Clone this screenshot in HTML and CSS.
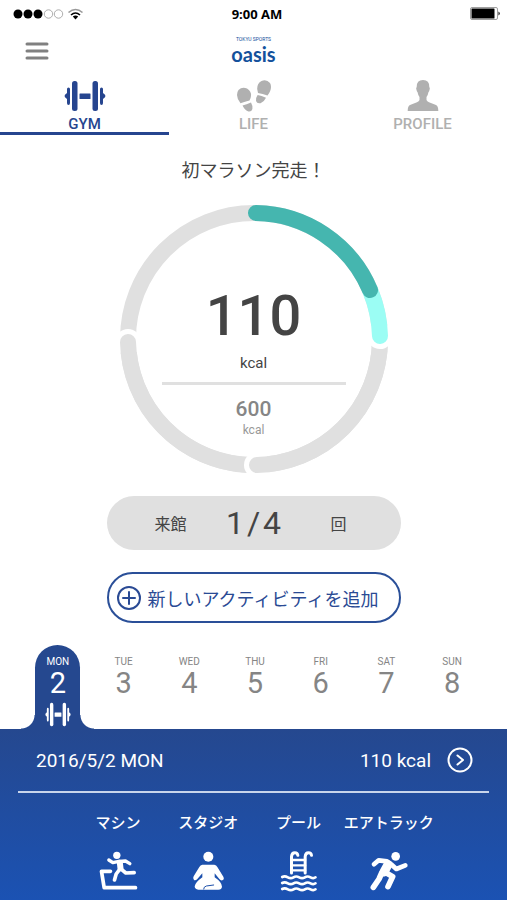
FILE: index.html
```html
<!DOCTYPE html>
<html lang="ja">
<head>
  <meta charset="UTF-8">
  <meta name="viewport" content="width=device-width, initial-scale=1.0">
  <title>OASIS</title>
  <link rel="stylesheet" href="styles.css">
</head>
<body>
  <svg width="0" height="0" class="symbols">
    <symbol id="dumbbell" viewBox="0 0 42 32" preserveAspectRatio="none">
      <path d="M1 14.8 L3 13 V9 Q3 7.5 4.5 7.5 T6 9 V23 Q6 25 4.5 25 T3 23 V19 L1 17.2 Q.2 16 1 14.8Z"/>
      <rect x="8" y="1" width="5.5" height="30" rx="2.5"/>
      <rect x="15.5" y="13.5" width="11" height="5.5" rx=".5"/>
      <rect x="28.5" y="1" width="5.5" height="30" rx="2.5"/>
      <path d="M41 14.8 L39 13 V9 Q39 7.5 37.5 7.5 T36 9 V23 Q36 25 37.5 25 T39 23 V19 L41 17.2 Q41.8 16 41 14.8Z"/>
    </symbol>
  </svg>

  <div class="status">
    <svg class="signal" viewBox="0 0 72 14" width="72" height="14">
      <circle cx="5" cy="7" r="4.5"/>
      <circle cx="15" cy="7" r="4.5"/>
      <circle cx="25" cy="7" r="4.5"/>
      <g fill="none" stroke="#999" stroke-width=".8">
        <circle cx="35.5" cy="7" r="4.2"/>
        <circle cx="45.5" cy="7" r="4.2"/>
      </g>
      <g fill="none" stroke="#000" stroke-width="1.6">
        <path d="M55.5 5.5 Q62.5 -.5 69.5 5.5" stroke="#999"/>
        <path d="M58 8 Q62.5 4 67 8"/>
      </g>
      <path d="M59.8 9.6 Q62.5 7.6 65.2 9.6 L62.5 12.4Z"/>
    </svg>
    <span class="time">9:00 AM</span>
    <svg class="battery" viewBox="0 0 31 13" width="31" height="13">
      <rect x=".5" y=".5" width="27" height="12" rx="1.5" fill="#fff" stroke="#777" stroke-width=".7"/>
      <rect x="1.5" y="1.5" width="23" height="10" rx=".5"/>
      <path d="M28.5 4.5 Q31 6.5 28.5 8.5Z"/>
    </svg>
  </div>

  <header class="header">
    <button class="menu" aria-label="メニュー">
      <svg viewBox="0 0 24 18" width="24" height="18" stroke="#808080" stroke-width="3" stroke-linecap="round">
        <path d="M2 2 H22 M2 9 H22 M2 16 H22"/>
      </svg>
    </button>
    <div class="logo">
      <span class="logo-sub">TOKYU SPORTS</span>
      <span class="logo-name">oasis</span>
    </div>
  </header>

  <nav class="tabs">
    <a class="tab active" href="#gym">
      <svg width="42" height="32"><use href="#dumbbell"/></svg>
      GYM
    </a>
    <a class="tab" href="#life">
      <svg viewBox="0 0 40 32" width="40" height="32">
        <path d="M4.5 10 Q8 6.500 13 8.500 Q17.500 11 17 16 Q16.800 18.500 15.500 20.500 Q11 21.500 6.500 23.300 Q3 19 3 15 Q3 12 4.500 10Z"/>
        <path d="M8.500 25.500 Q12.500 24.500 17 22.500 Q19 26 18.400 29 Q17.500 32 14.500 31.500 Q11 30.500 8.500 25.500Z"/>
        <path d="M36 3 Q32.500 -1 27.500 1 Q23 3.500 23.200 9 L24 13 Q28.500 13.500 33.500 15.600 Q37 11 37 7 Q37 4.500 36 3Z"/>
        <path d="M23.600 15 Q27.500 15.500 32 17.800 Q30.500 21.500 26.500 23.200 Q23 24 22 21 Q21.500 18 23.600 15Z"/>
      </svg>
      LIFE
    </a>
    <a class="tab" href="#profile">
      <svg viewBox="0 0 32 32" width="32" height="32">
        <path d="M16 0 Q22.500 0 22.300 7 Q23.300 8 22.500 10 Q22 12 21.500 12 Q21 15 19.500 17 V20 Q20 21.500 22 22.300 L29 25 Q31.300 26 31.300 31 H.7 Q.7 26 3 25 L10 22.300 Q12 21.500 12.500 20 V17 Q11 15 10.500 12 Q10 12 9.500 10 Q8.700 8 9.700 7 Q9.500 0 16 0Z"/>
      </svg>
      PROFILE
    </a>
  </nav>

  <main class="main">
    <h1 class="goal">初マラソン完走！</h1>

    <div class="ring">
      <!-- each segment lies over the one before it, with a white rim round its cap -->
      <svg class="ring-chart" viewBox="0 0 270 270" width="270" height="270" fill="none" stroke-width="16" stroke-linecap="round">
        <circle cx="135" cy="135" r="126" stroke="#e0e0e0"/>
        <circle cx="9" cy="138" r="13" fill="#fff"/>
        <path d="M9 138 A126 126 0 0 0 128 261" stroke="#e0e0e0"/>
        <circle cx="138" cy="261" r="13" fill="#fff"/>
        <path d="M138 261 A126 126 0 0 0 261 138" stroke="#e0e0e0"/>
        <circle cx="261" cy="132" r="13" fill="#fff"/>
        <path d="M251 86 A126 126 0 0 1 261 132" stroke="#9bfdf4"/>
        <path d="M137 9 A126 126 0 0 1 251 86" stroke="#45b6af"/>
      </svg>
      <div class="ring-text">
        <span class="burned">110</span>
        <span class="unit">kcal</span>
        <span class="target">600</span>
        <span class="unit-small">kcal</span>
      </div>
    </div>

    <div class="visits">
      <span>来館</span>
      <span class="count"><span>1</span><span>/</span><span>4</span></span>
      <span class="times">回</span>
    </div>

    <button class="add">
      <svg viewBox="0 0 24 24" width="24" height="24" fill="none" stroke="#2a4a94" stroke-width="2" stroke-linecap="round">
        <circle cx="12" cy="12" r="11"/>
        <path d="M12 6 V18 M6 12 H18"/>
      </svg>
      新しいアクティビティを追加
    </button>
  </main>

  <div class="week">
    <button class="day active">
      <span class="day-name">MON</span>
      <span class="day-num">2</span>
      <svg width="26" height="25"><use href="#dumbbell"/></svg>
    </button>
    <button class="day"><span class="day-name">TUE</span><span class="day-num">3</span></button>
    <button class="day"><span class="day-name">WED</span><span class="day-num">4</span></button>
    <button class="day"><span class="day-name">THU</span><span class="day-num">5</span></button>
    <button class="day"><span class="day-name">FRI</span><span class="day-num">6</span></button>
    <button class="day"><span class="day-name">SAT</span><span class="day-num">7</span></button>
    <button class="day"><span class="day-name">SUN</span><span class="day-num">8</span></button>
  </div>

  <section class="panel">
    <div class="summary">
      <span>2016/5/2 MON</span>
      <span class="total">110 kcal</span>
      <button class="more" aria-label="詳細">
        <svg viewBox="0 0 26 26" width="26" height="26" fill="none" stroke="#fff" stroke-width="2" stroke-linecap="round" stroke-linejoin="round">
          <circle cx="13" cy="13" r="11.5"/>
          <path d="M10.500 8.500 L16 13 L10.500 17.500"/>
        </svg>
      </button>
    </div>

    <div class="activities">
      <a class="activity" href="#machine">
        マシン
        <svg viewBox="49.5 147 132 132" width="44" height="44" fill="none" stroke="#fff" stroke-linecap="round" stroke-linejoin="round">
          <circle cx="112" cy="166" r="11" fill="#fff" stroke="none"/>
          <path d="M93 214 H66 L74 263 H168" stroke-width="11"/>
          <path d="M88 180 L100 188 L118 184 L138 183 L151 191" stroke-width="10"/>
          <path d="M121 188 L123 205" stroke-width="18"/>
          <path d="M126 208 L139 219 L164 218" stroke-width="11"/>
          <path d="M120 209 L110 222 L105 240" stroke-width="11"/>
        </svg>
      </a>
      <a class="activity" href="#studio">
        スタジオ
        <svg viewBox="321 147 132 132" width="44" height="44" fill="#fff" stroke-linecap="round" stroke-linejoin="round">
          <circle cx="388" cy="170" r="15"/>
          <path d="M370 194 H406 Q412 195 415 201 L433 230 Q437 238 430 241 Q425 242 421 237 L407 220 V232 Q428 246 429 260 Q428 269 418 269 H358 Q347 268 347 259 Q349 247 370 232 V220 L355 237 Q350 242 345 240 Q340 236 344 229 L361 201 Q364 195 370 194Z"/>
          <path d="M374 267 Q374 260 382 258 L404 255" fill="none" stroke="#1e50aa" stroke-width="3"/>
        </svg>
      </a>
      <a class="activity" href="#pool">
        プール
        <svg viewBox="52.5 147 132 132" width="44" height="44" fill="none" stroke="#fff" stroke-width="9" stroke-linecap="round" stroke-linejoin="round">
          <path d="M96 219 V170 Q97 158 106 158 Q114 158 115 166 M137 219 V170 Q138 158 147 158 Q155 158 156 166"/>
          <path stroke-width="7" d="M96 180 H137 M96 196 H137 M96 211 H137"/>
          <path stroke-width="8" d="M68 231 q8 -4 17 1 t17 0 t17 0 t17 0 t17 0 t15 0 M68 249 q8 -4 17 1 t17 0 t17 0 t17 0 t17 0 t15 0 M68 267 q8 -4 17 1 t17 0 t17 0 t17 0 t17 0 t15 0"/>
        </svg>
      </a>
      <a class="activity" href="#airtrack">
        エアトラック
        <svg viewBox="324 147 132 132" width="44" height="44" fill="none" stroke="#fff" stroke-width="17" stroke-linecap="round" stroke-linejoin="round">
          <circle cx="410" cy="169" r="13" fill="#fff" stroke="none"/>
          <path d="M345 193 L359 181 L384 184 L398 194 L412 207 L439 196" stroke-width="14"/>
          <path d="M387 194 L375 216" stroke-width="27"/>
          <path d="M368 219 L360 237 L343 262"/>
          <path d="M379 217 L401 230 L387 260"/>
        </svg>
      </a>
    </div>
  </section>
</body>
</html>
```

FILE: styles.css
```css
* {
  margin: 0;
  padding: 0;
  box-sizing: border-box;
}

body {
  font-family: Roboto, "Noto Sans CJK JP", sans-serif;
  background-color: #fff;
  color: #444;
  display: flex;
  flex-direction: column;
  min-height: 100vh;
}

button {
  font-family: inherit;
  background: none;
  border: none;
  color: inherit;
  cursor: pointer;
}

a {
  color: inherit;
  text-decoration: none;
}

svg {
  display: block;
}

.symbols {
  position: absolute;
}

/* Status bar */
.status {
  display: grid;
  grid-template-columns: 1fr auto 1fr;
  align-items: center;
  height: 27px;
  padding: 0 6px 0 13px;
}

.time {
  font-family: "Open Sans", sans-serif;
  font-size: 13px;
  font-weight: 700;
  line-height: 20px;
  color: #000;
}

.battery {
  justify-self: end;
}

/* Header */
.header {
  display: grid;
  grid-template-columns: 1fr auto 1fr;
  align-items: center;
  height: 48px;
  padding: 0 25px;
}

.menu {
  justify-self: start;
}

.logo {
  display: flex;
  flex-direction: column;
  align-items: center;
  color: #14519c;
}

.logo-sub {
  font-size: 5px;
  line-height: 6px;
}

.logo-name {
  font-family: Lato, sans-serif;
  font-size: 20px;
  font-weight: 700;
  line-height: 24px;
}

/* Tabs */
.tabs {
  display: flex;
}

.tab {
  flex: 1;
  display: flex;
  flex-direction: column;
  align-items: center;
  gap: 4px;
  padding-top: 5px;
  border-bottom: 3px solid transparent;
  font-size: 15px;
  font-weight: 500;
  line-height: 16px;
  color: #b0b0b0;
  fill: #b0b0b0;
}

.tab.active {
  color: #26458f;
  fill: #26458f;
  border-color: #26458f;
}

/* Goal and ring */
.main {
  display: flex;
  flex-direction: column;
  align-items: center;
  gap: 22px;
  padding: 25px 20px 22px;
}

.goal {
  font-size: 18px;
  font-weight: 400;
  line-height: 22px;
}

.ring {
  display: grid;
  justify-items: center;
}

.ring-chart,
.ring-text {
  grid-area: 1 / 1;
}

.ring-text {
  display: flex;
  flex-direction: column;
  align-items: center;
  width: 184px;
  padding-top: 80px;
}

.burned {
  font-size: 56px;
  font-weight: 500;
  line-height: 64px;
}

.unit {
  width: 100%;
  margin-top: 5px;
  padding-bottom: 9px;
  border-bottom: 3px solid #e0e0e0;
  font-size: 15px;
  line-height: 20px;
  text-align: center;
}

.target {
  margin-top: 11px;
  font-size: 21px;
  font-weight: 500;
  line-height: 26px;
  color: #868686;
}

.unit-small {
  font-size: 12px;
  line-height: 16px;
  color: #999;
}

/* Visits and add button */
.visits,
.add {
  align-items: center;
  width: 100%;
  max-width: 294px;
  border-radius: 27px;
}

.visits {
  display: grid;
  grid-template-columns: 1fr auto 1fr;
  height: 54px;
  padding: 0 48px;
  background-color: #e0e0e0;
  font-size: 16px;
}

.count {
  display: flex;
  gap: 3px;
  font-size: 32px;
  line-height: 40px;
}

.times {
  justify-self: end;
  margin-right: 6px;
}

.add {
  display: flex;
  gap: 7px;
  height: 51px;
  padding-left: 8px;
  border: 2px solid #2a4f98;
  font-size: 18px;
  color: #2a4a94;
}

/* Week */
.week {
  display: grid;
  grid-template-columns: repeat(7, 1fr);
  justify-items: center;
  padding: 0 22px 0 25px;
}

.day {
  display: flex;
  flex-direction: column;
  align-items: center;
  width: 45px;
  height: 84px;
  padding-top: 11px;
  color: #858585;
}

.day-name {
  font-size: 10px;
  line-height: 12px;
}

.day-num {
  font-size: 29px;
  line-height: 30px;
}

.day svg {
  margin-top: 4px;
  fill: #fff;
}

.day.active {
  position: relative;
  background-color: #25488f;
  border-radius: 23px 23px 0 0;
  color: #fff;
}

/* Flared foot of the selected day */
.day.active::before,
.day.active::after {
  content: "";
  position: absolute;
  bottom: 0;
  width: 14px;
  height: 14px;
}

.day.active::before {
  right: 100%;
  background: radial-gradient(circle at 0 0, transparent 13px, #25488f 14px);
}

.day.active::after {
  left: 100%;
  background: radial-gradient(circle at 100% 0, transparent 13px, #25488f 14px);
}

/* Day panel */
.panel {
  flex: 1;
  padding: 0 18px;
  background: linear-gradient(#25488f, #1b52b3);
  color: #fff;
}

.summary {
  display: flex;
  align-items: center;
  height: 64px;
  padding: 0 16px 0 18px;
  border-bottom: 2px solid #c8d5ec;
  font-size: 19px;
}

.total {
  margin-left: auto;
}

.more {
  margin-left: 16px;
}

.activities {
  display: grid;
  grid-template-columns: repeat(4, 1fr);
  padding: 18px 55px 0;
}

.activity {
  display: flex;
  flex-direction: column;
  align-items: center;
  gap: 14px;
  padding-bottom: 7px;
  font-size: 15px;
  font-weight: 500;
  line-height: 24px;
  white-space: nowrap;
}
```
